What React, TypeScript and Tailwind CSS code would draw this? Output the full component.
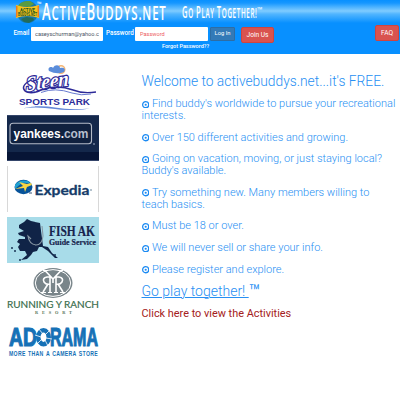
import React from "react";

function GlobeLogo() {
  return (
    <svg className="ml-[14px] block h-6 w-[26px] shrink-0" viewBox="0 0 26 24">
      <circle cx="13.5" cy="12" r="11" fill="#1778a8" />
      <path d="M4 6C7 1 12 1 16 1L20 4L15 7L9 6L6 10Z" fill="#599b42" />
      <path d="M7 19L12 17L19 18L20 20L15 23L10 22Z" fill="#236b5b" />
      <path d="M2 5Q13 9 25 5V18Q13 14 2 18Z" fill="#f6c31d" />
      <path d="M2.7 6V17M24.3 6V17" stroke="#ef7d20" strokeWidth="1.5" />
      <text x="6" y="11.5" fontSize="5" fontWeight="700" fontFamily="Roboto, sans-serif" fill="#25551d" textLength="15" lengthAdjust="spacingAndGlyphs">ACTIVE</text>
      <text x="4" y="16.3" fontSize="5" fontWeight="700" fontFamily="Roboto, sans-serif" fill="#25551d" textLength="19" lengthAdjust="spacingAndGlyphs">BUDDYS.NET</text>
    </svg>
  );
}

function Wordmark() {
  return (
    <div className="flex h-6 whitespace-nowrap font-['Open_Sans',sans-serif] text-white">
      <span className="-ml-[3px] mt-px w-[5px] text-[6px] leading-[7px] font-bold">™</span>
      <div className="w-[141px]">
        <span className="inline-block origin-left scale-x-[0.57] text-[20px] leading-[23px] font-semibold tracking-[1.5px]">
          <span className="text-[23px]">A</span>CTIVE<span className="text-[23px]">B</span>UDDYS.NET
        </span>
      </div>
      <div className="-ml-px w-[75px]">
        <span className="inline-block origin-left scale-x-[0.45] text-[14px] leading-[23px] font-semibold tracking-[1.4px]">
          <span className="text-[17px]">G</span>O <span className="text-[17px]">P</span>LAY <span className="text-[17px]">T</span>OGETHER!
        </span>
      </div>
      <span className="mt-[6px] text-[7px] leading-[7px]">™</span>
    </div>
  );
}

const logo = "block h-[46px] w-[92px]";

function Steen() {
  return (
    <svg className={logo} viewBox="0 0 92 46">
      <circle cx="54" cy="5.5" r="3.8" fill="none" stroke="#f5b574" strokeWidth="1.5" />
      <path d="M42 7C40 3 45 2 46 4C48 0 53 1 53 4C57 3 59 5 57 8Q50 11 42 7Z" fill="#5b8dda" />
      <g transform="translate(19 27.5) rotate(-8) skewX(-8)">
        <text fontSize="21" fontFamily="'Liberation Serif', serif" fontStyle="italic" fontWeight="700" fill="#fff" stroke="#2d2a98" strokeWidth="2.6" paintOrder="stroke" textLength="43" lengthAdjust="spacingAndGlyphs">Steen</text>
      </g>
      <path d="M24 16Q13 22 18 27Q24 31 34 26Q50 20 66 26Q76 30 89 28" fill="none" stroke="#2d2a98" strokeWidth="1.4" />
      <path d="M34 28.5Q48 23 65 29Q74 32 84 30" fill="none" stroke="#697bd0" />
      <text x="12" y="40.5" fontSize="9.6" fontFamily="'Liberation Sans', sans-serif" fontWeight="700" fill="#2c2c99" textLength="71" lengthAdjust="spacingAndGlyphs">SPORTS PARK</text>
      <path d="M16 44.2Q32 40.5 48 43.5T83 44.5Q66 47.5 48 44.9T16 44.2" fill="#6487d8" />
    </svg>
  );
}

function Yankees() {
  return (
    <svg className={logo} viewBox="0 0 92 46">
      <path d="M0 0H92V46H0Z" fill="#14284b" />
      <path d="M0 37H92V46H0Z" fill="#071536" />
      <path d="M0 .5H92M0 45.5H92" stroke="#34456a" />
      <rect x="3" y="8.3" width="81.5" height="20.5" rx="3" fill="#10213f" stroke="#b4bbc7" strokeWidth="1.1" />
      <text x="6.5" y="22.5" fontSize="13.5" fontFamily="'Liberation Sans', sans-serif" fontWeight="700" fill="white" textLength="75" lengthAdjust="spacingAndGlyphs">yankees.<tspan fill="#b6bfce">com</tspan></text>
      <path d="M86 29H88" stroke="#a2aec4" />
    </svg>
  );
}

function Expedia() {
  return (
    <svg className={logo} viewBox="0 0 92 46">
      <path d="M.5 0V46M91.5 0V46" stroke="#d8d8d8" />
      <ellipse cx="16.5" cy="21" rx="9" ry="7.2" fill="#07539a" />
      <path d="M8 19Q12 13 21 15L25 19Q20 16 15 17Q11 20 8 23Z" fill="#20a1d0" />
      <path d="M8 23L16 20L12 16L20 18L24 17L25 19L20 21L18 26L17 22Z" fill="#f9d544" />
      <path d="M22 27H25" stroke="#38577a" />
      <text x="27.5" y="28.5" fontSize="13.6" fontFamily="Lato, sans-serif" fontWeight="700" fill="#153b69" stroke="#153b69" strokeWidth=".3" textLength="55" lengthAdjust="spacingAndGlyphs">Expedia</text>
      <circle cx="84" cy="24" r=".8" fill="#55758e" />
    </svg>
  );
}

function FishAK() {
  return (
    <svg className={logo} viewBox="0 0 92 46">
      <path d="M0 0H92V46H0Z" fill="#a8dce9" />
      <path d="M12 8L17 5L20 2L24 4L33 6L36 29L41 30L45 36L51 41L48 41L41 34L35 30L32 30L30 34L26 35L24 38L20 42L14 43L20 38L18 34L13 34L11 30L13 27L10 25L12 22L18 22V20L12 18L11 16L17 14L12 11Z" fill="#102447" />
      <path d="M35 9L36 19Q35 28 29 28Q22 27 21 19L24 22" fill="none" stroke="#8797a4" strokeWidth="1.1" />
      <path d="M4 31H6M7 34H9M12 43H14M46 38H49" stroke="#173354" strokeWidth="1.3" />
      <g fontFamily="'Liberation Serif', serif" fontWeight="700" fill="#17234d" stroke="#17234d" strokeWidth=".2">
        <text x="42" y="18.5" fontSize="15.5" textLength="46" lengthAdjust="spacingAndGlyphs">FISH AK</text>
        <text x="42" y="28" fontSize="8.5" textLength="47" lengthAdjust="spacingAndGlyphs">Guide Service</text>
      </g>
    </svg>
  );
}

function Ranch() {
  return (
    <svg className={logo} viewBox="0 0 92 46">
      <ellipse cx="46" cy="15" rx="19.5" ry="15" fill="#79858a" />
      <ellipse cx="46" cy="15" rx="17.7" ry="13.4" fill="none" stroke="white" />
      <g fill="none" stroke="white" strokeWidth="1.6">
        <path d="M38 2.5L46 11L54 2.5M46 11V15M49 9V24M49 9H52Q57 10 55 14Q53 17 49 16M51 16L56 24M43 9V24M43 9H40Q35 10 37 14Q39 17 43 16M41 16L36 24" />
        <path d="M36 2.5H41M51 2.5H56M34 24.5H39M53 24.5H58M41 24.5H45M47 24.5H51" strokeWidth="1" />
      </g>
      <text x="0" y="40" fontSize="8.7" fontFamily="Lato, sans-serif" fill="#386c4b" stroke="#386c4b" strokeWidth=".15" textLength="92" lengthAdjust="spacingAndGlyphs">RUNNING Y RANCH</text>
      <text x="28" y="45.5" fontSize="4.4" fontFamily="'Liberation Serif', serif" fontWeight="700" fill="#58765b" textLength="37">RESORT</text>
    </svg>
  );
}

function Adorama() {
  return (
    <svg className={logo} viewBox="0 0 92 46">
      <g fill="#1671b6" stroke="#1671b6" fontFamily="'Liberation Sans', sans-serif" fontWeight="700">
        <text x="2" y="27" fontSize="25" strokeWidth="1.1" textLength="28" lengthAdjust="spacingAndGlyphs">AD</text>
        <text x="43" y="27" fontSize="25" strokeWidth="1.1" textLength="48" lengthAdjust="spacingAndGlyphs">RAMA</text>
      </g>
      <ellipse cx="36.5" cy="18.2" rx="5.2" ry="7" fill="none" stroke="#1671b6" strokeWidth="4.5" />
      <path d="M31 9L36 15M43 11L38 16M45 20L39 19M41 27L38 21M30 25L34 21M28 16L34 18" stroke="white" strokeWidth=".8" />
      <text x="2" y="37" fontSize="6.8" fontFamily="'Liberation Sans Narrow', 'Liberation Sans', sans-serif" fontWeight="700" fill="#1671b6" textLength="89" lengthAdjust="spacingAndGlyphs" wordSpacing="1" letterSpacing=".4">MORE THAN A CAMERA STORE</text>
    </svg>
  );
}

function Bullet() {
  return (
    <svg className="mr-[3px] inline-block h-[7.4px] w-[7.4px] align-[-1px]" viewBox="0 0 7 7">
      <circle cx="3.5" cy="3.5" r="2.9" fill="none" stroke="#1b8af3" strokeWidth="1.2" />
      <circle cx="3.5" cy="3.5" r="1" fill="#1b8af3" />
    </svg>
  );
}

const points = [
  ["Find buddy's worldwide to pursue your recreational", "interests."],
  ["Over 150 different activities and growing."],
  ["Going on vacation, moving, or just staying local?", "Buddy's available."],
  ["Try something new. Many members willing to", "teach basics."],
  ["Must be 18 or over."],
  ["We will never sell or share your info."],
  ["Please register and explore."],
];

export default function App() {
  return (
    <div className="h-[400px] w-[400px] overflow-hidden bg-white font-['Roboto',sans-serif]">
      <header className="h-[54px] bg-[linear-gradient(180deg,#0890ff_0px,#1697ff_3px,#80ccff_11px,#51b5ff_14px,#0890ff_23px)]">
        <div className="flex h-6"><GlobeLogo /><Wordmark /></div>
        <div className="flex items-start text-white">
          <label className="ml-[13.5px] mt-[5px] w-[17.5px] text-[6.4px] leading-[9px] font-medium">Email</label>
          <input readOnly value="caseyschurman@yahoo.c" className="mt-[3px] h-[14px] w-[72px] rounded-[1px] bg-white px-[4px] text-[5.6px] text-gray-600 outline-none" />
          <label className="ml-[3px] mt-[5px] w-[29px] text-[6.3px] leading-[9px] font-medium">Password</label>
          <input placeholder="Password" className="mt-[3px] h-[14px] w-[73px] rounded-[1px] bg-white px-[5px] text-[5.6px] outline-none placeholder:text-[#ed5a60]" />
          <button className="ml-[2px] mt-[3px] h-[14px] w-[25px] rounded-[1px] border border-[#2e6da4] bg-[#337ab7] text-[5.8px] leading-none whitespace-nowrap">Log In</button>
          <button className="ml-[6px] mt-[3px] h-4 w-[33px] rounded-[2px] border border-[#cf4440] bg-[#d9534f] text-[6.6px] leading-none">Join Us</button>
          <button className="ml-auto mr-px mt-[1px] h-4 w-6 rounded-[2px] border border-[#cf4440] bg-[#d9534f] text-[6.6px] leading-none">FAQ</button>
        </div>
        <p className="-mt-px ml-[162px] text-[5.5px] leading-[8px] font-medium text-white">Forgot Password??</p>
      </header>
      <main className="flex">
        <aside className="ml-[7px] mt-[10px] flex w-[92px] shrink-0 flex-col gap-[5px]">
          <Steen /><Yankees /><Expedia /><FishAK /><Ranch /><Adorama />
        </aside>
        <section className="ml-[42.5px] mt-[19px] whitespace-nowrap font-light text-[#278ff3]">
          <h1 className="mb-[9px] text-[13.8px] leading-4">Welcome to activebuddys.net...it's FREE.</h1>
          <div className="flex flex-col gap-[9.6px] text-[11px] leading-[12px]">
            {points.map((lines) => (
              <p key={lines[0]}>
                <Bullet />{lines[0]}
                {lines[1] && <span className="block">{lines[1]}</span>}
              </p>
            ))}
          </div>
          <p className="mt-[7px] flex items-start text-[14px] leading-4"><a className="whitespace-pre underline decoration-1">Go play together! </a><span className="mt-[1px] text-[19px] font-normal">™</span></p>
          <p className="mt-[8px] text-[10.9px] leading-3 font-normal text-[#a42020]">Click here to view the Activities</p>
        </section>
      </main>
    </div>
  );
}
